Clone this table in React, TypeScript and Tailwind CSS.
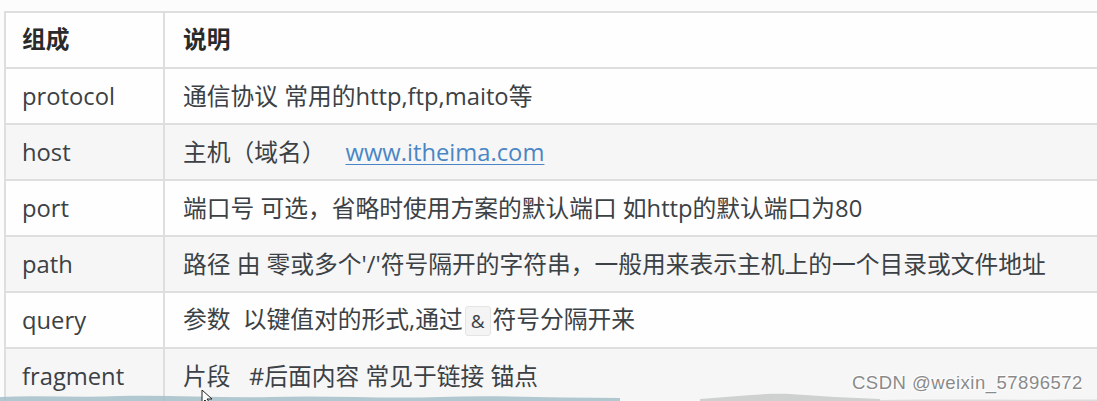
import React from "react";

const rows: { k: string; v: React.ReactNode }[] = [
  { k: "protocol", v: <>通信协议 常用的http,ftp,maito等</> },
  {
    k: "host",
    v: (
      <>
        主机（域名）
        <span className="ml-[20px] text-[#4a86c5] underline underline-offset-[3px] decoration-1">www.itheima.com</span>
      </>
    ),
  },
  { k: "port", v: <>端口号 可选，省略时使用方案的默认端口 如http的默认端口为80</> },
  { k: "path", v: <>路径 由 零或多个'/'符号隔开的字符串，一般用来表示主机上的一个目录或文件地址</> },
  {
    k: "query",
    v: (
      <>
        参数&nbsp;&nbsp;以键值对的形式,通过
        <span className="mx-[2px] inline-block rounded-[3px] border border-[#e4e4e4] bg-[#f4f4f4] px-[5px] text-[19px] leading-[28px]">&amp;</span>
        符号分隔开来
      </>
    ),
  },
  { k: "fragment", v: <>片段&nbsp;&nbsp;&nbsp;#后面内容 常见于链接 锚点</> },
];

export default function App() {
  return (
    <div
      className="relative h-[401px] w-[1097px] overflow-hidden bg-[#fcfcfc] pl-[4px] pt-[11px] text-[#3b4145]"
      style={{ fontFamily: '"Open Sans", "Noto Sans CJK SC", sans-serif' }}
    >
      <table className="w-[1110px] border-collapse border-2 border-[#dedede] text-[23.75px]">
        <thead>
          <tr className="h-[56px] bg-[#fefefe]">
            <th className="w-[159px] border-2 border-[#dedede] pl-[16px] text-left font-bold text-[#2a2a2a]">组成</th>
            <th className="border-2 border-[#dedede] pl-[18px] text-left font-bold text-[#2a2a2a]">说明</th>
          </tr>
        </thead>
        <tbody>
          {rows.map((r, i) => (
            <tr key={r.k} className={`h-[56px] ${i % 2 === 1 ? "bg-[#f6f6f6]" : "bg-[#fefefe]"}`}>
              <td className="border-2 border-[#dedede] pl-[16px] leading-[30px]">{r.k}</td>
              <td className="border-2 border-[#dedede] pl-[18px] whitespace-nowrap leading-[30px]">{r.v}</td>
            </tr>
          ))}
        </tbody>
      </table>

      {/* bottom wave decoration */}
      <svg className="absolute bottom-0 left-0" width="1097" height="12" viewBox="0 0 1097 12">
        <path
          d="M0 8 C40 6 80 9 120 7 C170 6 220 9 270 8 C330 6 380 10 440 8 C500 6 560 9 620 9 L620 12 L0 12 Z"
          fill="#a4c0c9"
          opacity="0.85"
        />
        <path d="M700 10 C730 8 760 4 790 5 C820 7 850 9 880 10 L880 12 L700 12 Z" fill="#cfd1d1" />
        <path d="M880 11 C950 10 1000 11 1097 10.5 L1097 12 L880 12 Z" fill="#dcdede" />
      </svg>

      {/* cursor */}
      <svg className="absolute left-[201px] top-[390px]" width="14" height="14" viewBox="0 0 14 14">
        <path d="M1 0 L1 13 L4 10 L7 14 L9 13 L6 9 L11 9 Z" fill="#fff" stroke="#222" strokeWidth="1" />
      </svg>

      {/* watermark */}
      <div
        className="absolute left-[852px] top-[369px] text-[18.5px] tracking-[0.5px] text-[#8a8a8a]"
        style={{ fontFamily: '"Liberation Sans", Arial, sans-serif', textShadow: "1px 1px 0 #fff, -1px -1px 0 #fff" }}
      >
        CSDN @weixin_57896572
      </div>
    </div>
  );
}
